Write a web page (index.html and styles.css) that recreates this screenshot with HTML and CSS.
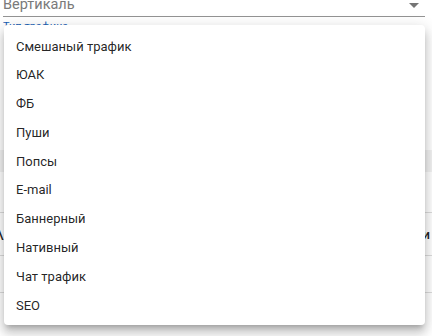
FILE: index.html
```html
<!DOCTYPE html>
<html lang="ru">
<head>
<meta charset="utf-8">
<link rel="stylesheet" href="styles.css">
</head>
<body>
<div class="page">
  <div class="select">
    <span class="select-value">Вертикаль</span>
    <svg class="arrow" width="10" height="5" viewBox="0 0 10 5"><path d="M0 0 L10 0 L5 5 Z" fill="#757575"/></svg>
  </div>
  <div class="label">Тип трафика</div>
  <div class="spacer"></div>
  <div class="band"></div>
  <div class="gap1"></div>
  <div class="row row-head"><span class="cell-left">\</span><span class="cell-right">ии</span></div>
  <div class="row row-a"></div>
  <div class="row row-b"></div>
</div>
<ul class="menu">
  <li class="item">Смешаный трафик</li>
  <li class="item">ЮАК</li>
  <li class="item">ФБ</li>
  <li class="item">Пуши</li>
  <li class="item">Попсы</li>
  <li class="item">E-mail</li>
  <li class="item">Баннерный</li>
  <li class="item">Нативный</li>
  <li class="item">Чат трафик</li>
  <li class="item">SEO</li>
</ul>
</body>
</html>
```
FILE: styles.css
```css
html, body {
  margin: 0;
  padding: 0;
  background: #fff;
  width: 432px;
  height: 336px;
  overflow: hidden;
  font-family: Roboto, "Noto Sans", sans-serif;
}
.page {
  position: relative;
  width: 432px;
}
.select {
  display: flex;
  align-items: flex-start;
  justify-content: space-between;
  margin: -4px 0 0 3px;
  width: 422px;
  height: 21px;
  border-bottom: 1px solid #949494;
  box-sizing: border-box;
}
.select-value {
  font-size: 14.5px;
  line-height: 18px;
  color: #7a7a7a;
}
.arrow {
  margin: 7px 6px 0 0;
}
.label {
  margin: 4px 0 0 3px;
  font-size: 11px;
  line-height: 12px;
  color: #1a5fb4;
}
.spacer {
  height: 117px;
}
.band {
  height: 22px;
  background: #f2f2f2;
}
.gap1 {
  height: 40px;
}
.row {
  border-top: 1px solid #dcdcdc;
  box-sizing: border-box;
  display: flex;
  justify-content: space-between;
  align-items: center;
  font-size: 13px;
  font-weight: 500;
  color: #222;
}
.row-head { height: 43px; }
.row-a { height: 37px; }
.row-b { height: 40px; }
.cell-left { margin-left: -2px; }
.cell-right { margin-right: 2px; }
.menu {
  position: absolute;
  left: 4px;
  top: 25px;
  width: 421px;
  height: 300px;
  margin: 0;
  padding: 7.5px 0 4.5px;
  box-sizing: border-box;
  list-style: none;
  background: #fff;
  border-radius: 4px;
  box-shadow: 0 5px 5px -3px rgba(0,0,0,0.2), 0 8px 10px 1px rgba(0,0,0,0.14), 0 3px 14px 2px rgba(0,0,0,0.12);
}
.item {
  height: 28.8px;
  line-height: 28.8px;
  padding-left: 12px;
  font-size: 13px;
  color: rgba(0,0,0,0.87);
  white-space: nowrap;
}
```
